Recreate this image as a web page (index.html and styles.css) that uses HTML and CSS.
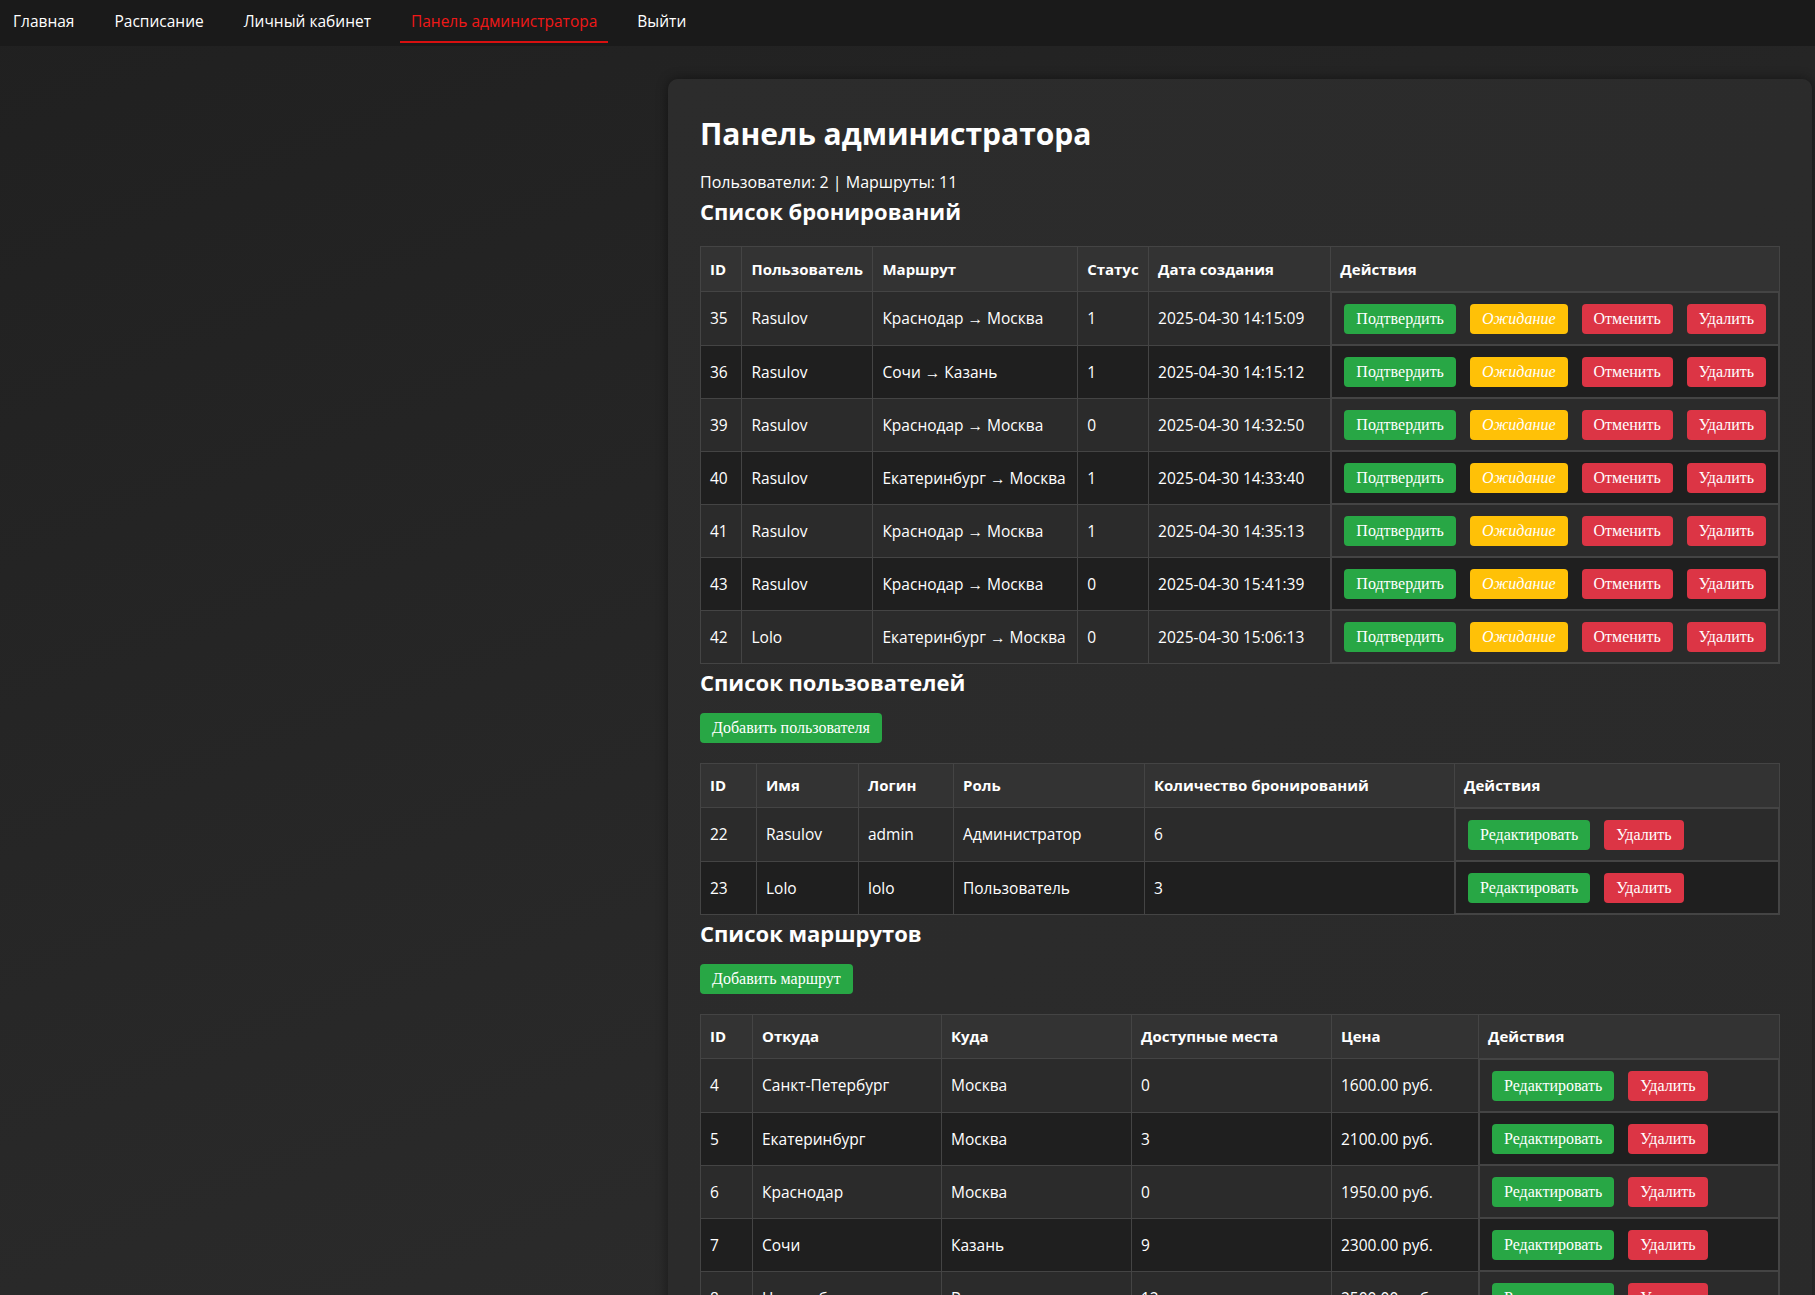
FILE: index.html
```html
<!DOCTYPE html>
<html lang="ru">
<head>
<meta charset="utf-8">
<title>Панель администратора</title>
<link rel="stylesheet" href="styles.css">
</head>
<body>
<nav class="nav">
  <a class="nav-link" href="#">Главная</a>
  <a class="nav-link" href="#">Расписание</a>
  <a class="nav-link" href="#">Личный кабинет</a>
  <a class="nav-link active" href="#">Панель администратора</a>
  <a class="nav-link" href="#">Выйти</a>
</nav>
<main class="panel">
  <h1 class="title">Панель администратора</h1>
  <p class="stats">Пользователи: 2 | Маршруты: 11</p>

  <h2 class="section">Список бронирований</h2>
  <table class="grid bookings">
    <thead>
      <tr><th class="b-id">ID</th><th class="b-user">Пользователь</th><th class="b-route">Маршрут</th><th class="b-status">Статус</th><th class="b-date">Дата создания</th><th>Действия</th></tr>
    </thead>
    <tbody>
      <tr><td>35</td><td>Rasulov</td><td>Краснодар → Москва</td><td>1</td><td>2025-04-30 14:15:09</td><td class="actions"><button class="btn green">Подтвердить</button><button class="btn yellow">Ожидание</button><button class="btn red">Отменить</button><button class="btn red">Удалить</button></td></tr>
      <tr><td>36</td><td>Rasulov</td><td>Сочи → Казань</td><td>1</td><td>2025-04-30 14:15:12</td><td class="actions"><button class="btn green">Подтвердить</button><button class="btn yellow">Ожидание</button><button class="btn red">Отменить</button><button class="btn red">Удалить</button></td></tr>
      <tr><td>39</td><td>Rasulov</td><td>Краснодар → Москва</td><td>0</td><td>2025-04-30 14:32:50</td><td class="actions"><button class="btn green">Подтвердить</button><button class="btn yellow">Ожидание</button><button class="btn red">Отменить</button><button class="btn red">Удалить</button></td></tr>
      <tr><td>40</td><td>Rasulov</td><td>Екатеринбург → Москва</td><td>1</td><td>2025-04-30 14:33:40</td><td class="actions"><button class="btn green">Подтвердить</button><button class="btn yellow">Ожидание</button><button class="btn red">Отменить</button><button class="btn red">Удалить</button></td></tr>
      <tr><td>41</td><td>Rasulov</td><td>Краснодар → Москва</td><td>1</td><td>2025-04-30 14:35:13</td><td class="actions"><button class="btn green">Подтвердить</button><button class="btn yellow">Ожидание</button><button class="btn red">Отменить</button><button class="btn red">Удалить</button></td></tr>
      <tr><td>43</td><td>Rasulov</td><td>Краснодар → Москва</td><td>0</td><td>2025-04-30 15:41:39</td><td class="actions"><button class="btn green">Подтвердить</button><button class="btn yellow">Ожидание</button><button class="btn red">Отменить</button><button class="btn red">Удалить</button></td></tr>
      <tr><td>42</td><td>Lolo</td><td>Екатеринбург → Москва</td><td>0</td><td>2025-04-30 15:06:13</td><td class="actions"><button class="btn green">Подтвердить</button><button class="btn yellow">Ожидание</button><button class="btn red">Отменить</button><button class="btn red">Удалить</button></td></tr>
    </tbody>
  </table>

  <h2 class="section">Список пользователей</h2>
  <button class="btn green add">Добавить пользователя</button>
  <table class="grid users">
    <thead>
      <tr><th class="u-id">ID</th><th class="u-name">Имя</th><th class="u-login">Логин</th><th class="u-role">Роль</th><th class="u-count">Количество бронирований</th><th>Действия</th></tr>
    </thead>
    <tbody>
      <tr><td>22</td><td>Rasulov</td><td>admin</td><td>Администратор</td><td>6</td><td class="actions"><button class="btn green">Редактировать</button><button class="btn red">Удалить</button></td></tr>
      <tr><td>23</td><td>Lolo</td><td>lolo</td><td>Пользователь</td><td>3</td><td class="actions"><button class="btn green">Редактировать</button><button class="btn red">Удалить</button></td></tr>
    </tbody>
  </table>

  <h2 class="section">Список маршрутов</h2>
  <button class="btn green add">Добавить маршрут</button>
  <table class="grid routes">
    <thead>
      <tr><th class="r-id">ID</th><th class="r-from">Откуда</th><th class="r-to">Куда</th><th class="r-seats">Доступные места</th><th class="r-price">Цена</th><th>Действия</th></tr>
    </thead>
    <tbody>
      <tr><td>4</td><td>Санкт-Петербург</td><td>Москва</td><td>0</td><td>1600.00 руб.</td><td class="actions"><button class="btn green">Редактировать</button><button class="btn red">Удалить</button></td></tr>
      <tr><td>5</td><td>Екатеринбург</td><td>Москва</td><td>3</td><td>2100.00 руб.</td><td class="actions"><button class="btn green">Редактировать</button><button class="btn red">Удалить</button></td></tr>
      <tr><td>6</td><td>Краснодар</td><td>Москва</td><td>0</td><td>1950.00 руб.</td><td class="actions"><button class="btn green">Редактировать</button><button class="btn red">Удалить</button></td></tr>
      <tr><td>7</td><td>Сочи</td><td>Казань</td><td>9</td><td>2300.00 руб.</td><td class="actions"><button class="btn green">Редактировать</button><button class="btn red">Удалить</button></td></tr>
      <tr><td>8</td><td>Новосибирск</td><td>Владивосток</td><td>12</td><td>2500.00 руб.</td><td class="actions"><button class="btn green">Редактировать</button><button class="btn red">Удалить</button></td></tr>
    </tbody>
  </table>
</main>
</body>
</html>
```

FILE: styles.css
```css
* { box-sizing: border-box; }

html, body {
  margin: 0;
  padding: 0;
}

body {
  min-height: 100vh;
  background: linear-gradient(160deg, #202020 0%, #272727 50%, #2e2e2e 100%);
  color: #ffffff;
  font-family: "Open Sans", "Noto Sans", sans-serif;
  font-size: 16px;
}

.nav {
  display: flex;
  align-items: flex-start;
  gap: 18px;
  height: 46px;
  padding-left: 2px;
  background: #1a1a1a;
}

.nav-link {
  display: flex;
  align-items: center;
  height: 43px;
  padding: 0 11px;
  color: #ffffff;
  text-decoration: none;
  font-size: 15.5px;
  border-bottom: 2px solid transparent;
}

.nav-link.active {
  color: #f01818;
  border-bottom-color: #d81010;
}

.panel {
  width: 1144px;
  margin: 33px 0 0 668px;
  padding: 32px;
  background: linear-gradient(135deg, #2c2c2c 0%, #2a2a2a 100%);
  border-radius: 10px;
  box-shadow: 0 0 12px rgba(0, 0, 0, 0.45);
}

.title {
  margin: 0 0 15px;
  font-size: 30px;
  line-height: 45px;
  font-weight: 700;
}

.stats {
  margin: 0 0 1px;
  font-size: 16px;
  line-height: 22px;
}

.section {
  margin: 2px 0 14px;
  font-size: 22px;
  line-height: 33px;
  font-weight: 700;
}

.grid {
  width: 100%;
  border-collapse: collapse;
  border: 1px solid #444;
  font-size: 15.5px;
}

.grid.bookings { margin-top: 18px; }

.grid th,
.grid td {
  padding: 12px 9px;
  border: 1px solid #444;
  text-align: left;
  line-height: 20px;
  white-space: nowrap;
}

.grid th {
  background: #333333;
  font-weight: 700;
  font-size: 15px;
}

.grid.users th,
.grid.routes th {
  padding: 11px 9px 12px;
}

.grid tbody tr:nth-child(odd) td { background: #2b2b2b; }
.grid tbody tr:nth-child(even) td { background: #1f1f1f; }

.grid td.actions {
  display: flex;
  gap: 14px;
  padding: 11px 12px 10px;
}

.b-id { width: 42px; }
.b-user { width: 131px; }
.b-route { width: 205px; }
.b-status { width: 71px; }
.b-date { width: 184px; }

.u-id { width: 56px; }
.u-name { width: 102px; }
.u-login { width: 95px; }
.u-role { width: 191px; }
.u-count { width: 310px; }

.r-id { width: 52px; }
.r-from { width: 189px; }
.r-to { width: 190px; }
.r-seats { width: 200px; }
.r-price { width: 147px; }

.btn {
  display: inline-block;
  height: 30px;
  padding: 0 12px;
  border: none;
  border-radius: 4px;
  color: #ffffff;
  font-family: "Liberation Serif", "DejaVu Serif", serif;
  font-size: 16px;
  line-height: 30px;
  cursor: pointer;
}

.btn.green { background: #28a745; }
.btn.yellow { background: #ffc107; font-style: italic; }
.btn.red { background: #dc3545; }

.btn.add {
  display: block;
  margin: 0 0 20px;
}
```
